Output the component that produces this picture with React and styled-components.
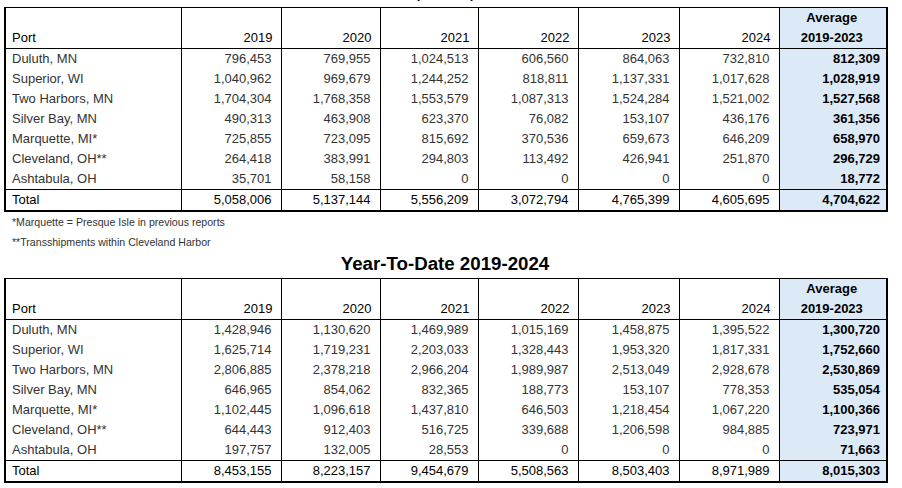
import React from 'react';
import styled, { createGlobalStyle } from 'styled-components';

const GlobalStyle = createGlobalStyle`
  html, body {
    margin: 0;
    padding: 0;
    background: #ffffff;
  }
  body {
    font-family: "Liberation Sans", Arial, sans-serif;
    overflow: hidden;
  }
`;

const Page = styled.div`
  width: 882px;
  padding-left: 4px;
  display: flex;
  flex-direction: column;
`;

// the unit line sits above the window's top edge, only its tail shows
const Caption = styled.div`
  margin-top: -14px;
  height: 16px;
  line-height: 16px;
  font-size: 13px;
  font-weight: bold;
  text-align: center;
  color: #000;
`;

const Heading = styled.h2`
  margin: 0 0 2px;
  height: 24px;
  line-height: 24px;
  font-size: 18.7px;
  font-weight: bold;
  text-align: center;
  color: #000;
`;

const Notes = styled.div`
  padding-left: 8px;
`;

const Note = styled.p`
  margin: 0;
  height: 20px;
  line-height: 20px;
  font-size: 10.6px;
  color: #333;
`;

const Table = styled.table`
  margin-top: ${p => p.$top || 0}px;
  width: 882px;
  table-layout: fixed;
  border-collapse: collapse;
  border-top: 1px solid #000;
  border-left: 2px solid #000;
  border-right: 2px solid #000;
  border-bottom: 2px solid #000;
  font-size: 13px;
`;

const HeadCell = styled.th`
  height: 40px;
  padding: 0 ${p => (p.$avg ? 6 : 8)}px 0 ${p => (p.$port ? 6 : 4)}px;
  vertical-align: bottom;
  line-height: 20px;
  font-weight: ${p => (p.$avg ? 'bold' : 'normal')};
  text-align: ${p => (p.$port ? 'left' : p.$avg ? 'center' : 'right')};
  color: #000;
  background: ${p => (p.$avg ? '#dceaf8' : 'transparent')};
  border-left: 1px solid #000;
  border-bottom: 1px solid #000;
`;

const Cell = styled.td`
  height: 20px;
  padding: 0 ${p => (p.$avg ? 6 : 9)}px 0 ${p => (p.$port ? 6 : 4)}px;
  line-height: 20px;
  white-space: nowrap;
  text-align: ${p => (p.$port ? 'left' : 'right')};
  font-weight: ${p => (p.$avg ? 'bold' : 'normal')};
  color: ${p => (p.$total || p.$avg ? '#000' : '#333')};
  background: ${p => (p.$avg ? '#dceaf8' : 'transparent')};
  border-left: 1px solid #000;
  border-top: ${p => (p.$total ? '1px solid #000' : 'none')};
`;

const widths = [176, 100, 99, 98, 100, 101, 100, 108];
const years = ['2019', '2020', '2021', '2022', '2023', '2024'];

const seasonRows = [
  ['Duluth, MN', '796,453', '769,955', '1,024,513', '606,560', '864,063', '732,810', '812,309'],
  ['Superior, WI', '1,040,962', '969,679', '1,244,252', '818,811', '1,137,331', '1,017,628', '1,028,919'],
  ['Two Harbors, MN', '1,704,304', '1,768,358', '1,553,579', '1,087,313', '1,524,284', '1,521,002', '1,527,568'],
  ['Silver Bay, MN', '490,313', '463,908', '623,370', '76,082', '153,107', '436,176', '361,356'],
  ['Marquette, MI*', '725,855', '723,095', '815,692', '370,536', '659,673', '646,209', '658,970'],
  ['Cleveland, OH**', '264,418', '383,991', '294,803', '113,492', '426,941', '251,870', '296,729'],
  ['Ashtabula, OH', '35,701', '58,158', '0', '0', '0', '0', '18,772'],
];
const seasonTotal = ['Total', '5,058,006', '5,137,144', '5,556,209', '3,072,794', '4,765,399', '4,605,695', '4,704,622'];

const ytdRows = [
  ['Duluth, MN', '1,428,946', '1,130,620', '1,469,989', '1,015,169', '1,458,875', '1,395,522', '1,300,720'],
  ['Superior, WI', '1,625,714', '1,719,231', '2,203,033', '1,328,443', '1,953,320', '1,817,331', '1,752,660'],
  ['Two Harbors, MN', '2,806,885', '2,378,218', '2,966,204', '1,989,987', '2,513,049', '2,928,678', '2,530,869'],
  ['Silver Bay, MN', '646,965', '854,062', '832,365', '188,773', '153,107', '778,353', '535,054'],
  ['Marquette, MI*', '1,102,445', '1,096,618', '1,437,810', '646,503', '1,218,454', '1,067,220', '1,100,366'],
  ['Cleveland, OH**', '644,443', '912,403', '516,725', '339,688', '1,206,598', '984,885', '723,971'],
  ['Ashtabula, OH', '197,757', '132,005', '28,553', '0', '0', '0', '71,663'],
];
const ytdTotal = ['Total', '8,453,155', '8,223,157', '9,454,679', '5,508,563', '8,503,403', '8,971,989', '8,015,303'];

const DataRow = ({ row, total }) => (
  <tr>
    {row.map((value, i) => (
      <Cell key={i} $port={i === 0} $avg={i === row.length - 1} $total={total}>
        {value}
      </Cell>
    ))}
  </tr>
);

const PortTable = ({ rows, total, top }) => (
  <Table $top={top}>
    <colgroup>
      {widths.map((w, i) => <col key={i} style={{ width: w }} />)}
    </colgroup>
    <thead>
      <tr>
        <HeadCell $port>Port</HeadCell>
        {years.map(y => <HeadCell key={y}>{y}</HeadCell>)}
        <HeadCell $avg>Average<br />2019-2023</HeadCell>
      </tr>
    </thead>
    <tbody>
      {rows.map(r => <DataRow key={r[0]} row={r} />)}
      <DataRow row={total} total />
    </tbody>
  </Table>
);

const App = () => (
  <Page>
    <GlobalStyle />
    <Caption>(net tons)</Caption>
    <PortTable rows={seasonRows} total={seasonTotal} top={5} />
    <Notes>
      <Note>*Marquette = Presque Isle in previous reports</Note>
      <Note>**Transshipments within Cleveland Harbor</Note>
    </Notes>
    <Heading>Year-To-Date 2019-2024</Heading>
    <PortTable rows={ytdRows} total={ytdTotal} />
  </Page>
);

export default App;
